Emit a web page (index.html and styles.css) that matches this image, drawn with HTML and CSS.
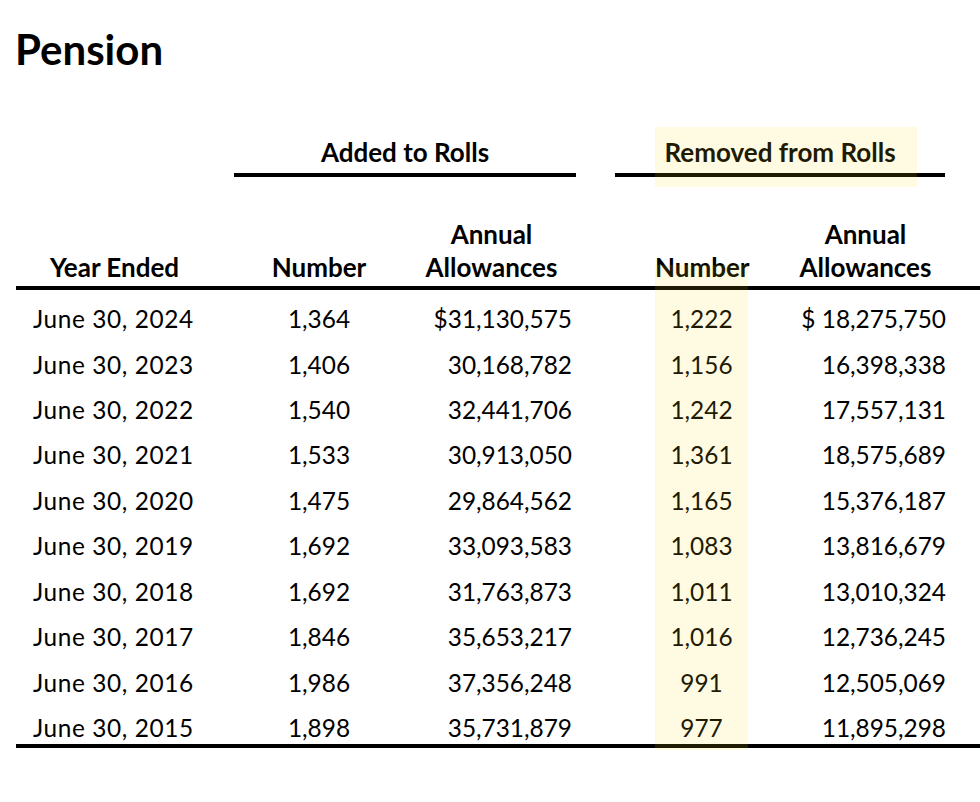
FILE: index.html
```html
<!DOCTYPE html>
<html lang="en">
<head>
<meta charset="utf-8">
<title>Pension</title>
<link rel="stylesheet" href="styles.css">
</head>
<body>
<h1 class="title">Pension</h1>
<table class="rolls">
  <colgroup>
    <col class="c-year"><col class="c-gap1"><col class="c-num"><col class="c-allow">
    <col class="c-gap2"><col class="c-rnum"><col class="c-gap3"><col class="c-rallow"><col class="c-gap4">
  </colgroup>
  <thead>
    <tr class="group-row">
      <td></td>
      <td colspan="3"><div class="group group-added">Added to Rolls</div></td>
      <td colspan="5"><div class="group group-removed">Removed from Rolls</div></td>
    </tr>
    <tr class="head-row">
      <th class="left-head">Year Ended</th>
      <th></th>
      <th>Number</th>
      <th class="two">Annual<br>Allowances</th>
      <th></th>
      <th>Number</th>
      <th></th>
      <th class="two">Annual<br>Allowances</th>
      <th></th>
    </tr>
  </thead>
  <tbody>
    <tr><td class="year">June 30, 2024</td><td></td><td class="num">1,364</td><td class="amt">$31,130,575</td><td></td><td class="num">1,222</td><td></td><td class="ramt">$ 18,275,750</td><td></td></tr>
    <tr><td class="year">June 30, 2023</td><td></td><td class="num">1,406</td><td class="amt">30,168,782</td><td></td><td class="num">1,156</td><td></td><td class="ramt">16,398,338</td><td></td></tr>
    <tr><td class="year">June 30, 2022</td><td></td><td class="num">1,540</td><td class="amt">32,441,706</td><td></td><td class="num">1,242</td><td></td><td class="ramt">17,557,131</td><td></td></tr>
    <tr><td class="year">June 30, 2021</td><td></td><td class="num">1,533</td><td class="amt">30,913,050</td><td></td><td class="num">1,361</td><td></td><td class="ramt">18,575,689</td><td></td></tr>
    <tr><td class="year">June 30, 2020</td><td></td><td class="num">1,475</td><td class="amt">29,864,562</td><td></td><td class="num">1,165</td><td></td><td class="ramt">15,376,187</td><td></td></tr>
    <tr><td class="year">June 30, 2019</td><td></td><td class="num">1,692</td><td class="amt">33,093,583</td><td></td><td class="num">1,083</td><td></td><td class="ramt">13,816,679</td><td></td></tr>
    <tr><td class="year">June 30, 2018</td><td></td><td class="num">1,692</td><td class="amt">31,763,873</td><td></td><td class="num">1,011</td><td></td><td class="ramt">13,010,324</td><td></td></tr>
    <tr><td class="year">June 30, 2017</td><td></td><td class="num">1,846</td><td class="amt">35,653,217</td><td></td><td class="num">1,016</td><td></td><td class="ramt">12,736,245</td><td></td></tr>
    <tr><td class="year">June 30, 2016</td><td></td><td class="num">1,986</td><td class="amt">37,356,248</td><td></td><td class="num">991</td><td></td><td class="ramt">12,505,069</td><td></td></tr>
    <tr><td class="year">June 30, 2015</td><td></td><td class="num">1,898</td><td class="amt">35,731,879</td><td></td><td class="num">977</td><td></td><td class="ramt">11,895,298</td><td></td></tr>
  </tbody>
</table>
</body>
</html>
```
FILE: styles.css
```css
html, body {
  margin: 0;
  padding: 0;
  background: #ffffff;
}

body {
  font-family: Lato, "Liberation Sans", sans-serif;
  color: #000000;
  width: 980px;
  height: 802px;
  overflow: hidden;
}

.title {
  font-size: 42px;
  font-weight: 700;
  line-height: 50.4px;
  margin: 23.5px 0 0 15px;
}

.rolls {
  position: relative;
  border-collapse: separate;
  border-spacing: 0;
  table-layout: fixed;
  width: 964px;
  margin: 62.5px 0 0 16px;
}

/* highlight overlays (yellow marker over the "Removed" header and number column) */
.rolls::before,
.rolls::after {
  content: "";
  position: absolute;
  left: 639px;
  background: rgba(255, 222, 22, 0.12);
  pointer-events: none;
}
.rolls::before {
  top: -9.4px;
  width: 262px;
  height: 60px;
}
.rolls::after {
  top: 128.6px;
  width: 93px;
  height: 485px;
}

.c-year { width: 197px; }
.c-gap1 { width: 37px; }
.c-num { width: 138px; }
.c-allow { width: 207px; }
.c-gap2 { width: 60px; }
.c-rnum { width: 93px; }
.c-gap3 { width: 20px; }
.c-rallow { width: 195px; }
.c-gap4 { width: 17px; }

.rolls td,
.rolls th {
  padding: 0;
  white-space: nowrap;
}

.rolls .group-row td {
  vertical-align: bottom;
}

.group {
  font-size: 26px;
  font-weight: 700;
  line-height: 33px;
  text-align: center;
  padding-bottom: 3.6px;
  border-bottom: 4px solid #000;
}
.group-added {
  margin: 0 19px 0 21px;
}
.group-removed {
  margin: 0 35px 0 20px;
}

.rolls .head-row th {
  font-size: 26px;
  font-weight: 700;
  line-height: 33px;
  text-align: center;
  vertical-align: bottom;
  padding-bottom: 1.6px;
  border-bottom: 4px solid #000;
}
.rolls .head-row th.two {
  padding-top: 41.4px;
}

.rolls tbody td {
  font-size: 24.4px;
  line-height: 32.32px;
  padding-top: 13.14px;
}
.rolls tbody tr:last-child td {
  border-bottom: 4px solid #000;
}

.rolls td.year {
  text-align: left;
  padding-left: 17px;
  letter-spacing: 0.6px;
}
.rolls td.num {
  text-align: center;
}
.rolls td.amt {
  text-align: right;
  padding-right: 23px;
}
.rolls td.ramt {
  text-align: right;
  padding-right: 17px;
}
```
